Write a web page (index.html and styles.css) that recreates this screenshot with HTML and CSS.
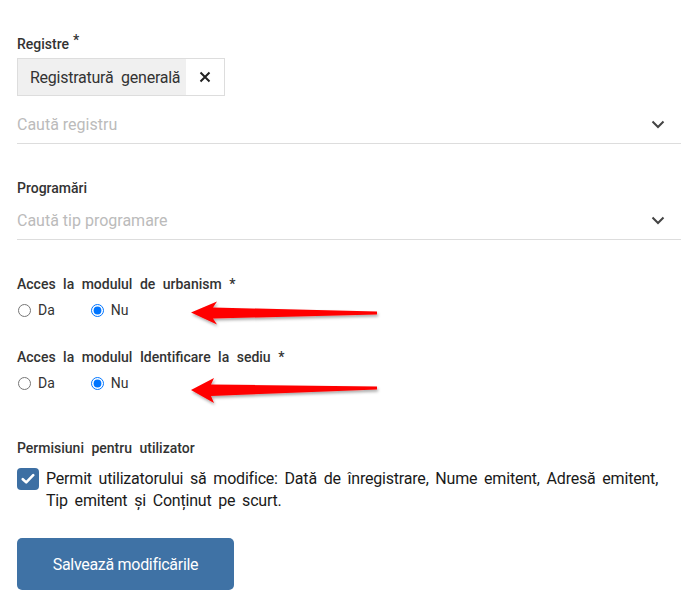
FILE: index.html
```html
<!DOCTYPE html>
<html>
<head>
    <title>Setări utilizator</title>
    <link rel="stylesheet" href="styles.css">
</head>
<body>
    <div class="page">
        <form class="form">
            <div class="field field-first">
                <div class="label">Registre<sup class="req">*</sup></div>
                <div class="tag">
                    <span class="tag-text">Registratură generală</span>
                    <span class="tag-remove">
                        <svg width="12" height="12" viewBox="0 0 12 12"><path d="M1.5 1.5 L10.5 10.5 M10.5 1.5 L1.5 10.5" stroke="#222" stroke-width="2" fill="none"/></svg>
                    </span>
                </div>
                <div class="select select-tight">
                    <span class="placeholder">Caută registru</span>
                    <svg class="chevron" width="14" height="9" viewBox="0 0 14 9"><path d="M1.5 1.5 L7 7 L12.5 1.5" stroke="#444" stroke-width="2" fill="none"/></svg>
                </div>
            </div>

            <div class="field">
                <div class="label">Programări</div>
                <div class="select">
                    <span class="placeholder">Caută tip programare</span>
                    <svg class="chevron" width="14" height="9" viewBox="0 0 14 9"><path d="M1.5 1.5 L7 7 L12.5 1.5" stroke="#444" stroke-width="2" fill="none"/></svg>
                </div>
            </div>

            <div class="field">
                <div class="label">Acces la modulul de urbanism *</div>
                <div class="radios">
                    <label class="radio"><input type="radio" name="urbanism"> Da</label>
                    <label class="radio"><input type="radio" name="urbanism" checked> Nu</label>
                </div>
            </div>

            <div class="field field-near">
                <div class="label">Acces la modulul Identificare la sediu *</div>
                <div class="radios">
                    <label class="radio"><input type="radio" name="sediu"> Da</label>
                    <label class="radio"><input type="radio" name="sediu" checked> Nu</label>
                </div>
            </div>

            <div class="field field-perm">
                <div class="label">Permisiuni pentru utilizator</div>
                <div class="check-row">
                    <span class="checkbox">
                        <svg width="14" height="12" viewBox="0 0 14 12"><path d="M1.8 6.2 L5.2 9.4 L12.2 2.2" stroke="#fff" stroke-width="2.6" fill="none" stroke-linecap="round" stroke-linejoin="round"/></svg>
                    </span>
                    <span class="check-text">Permit utilizatorului să modifice: Dată de înregistrare, Nume emitent, Adresă emitent, Tip emitent și Conținut pe scurt.</span>
                </div>
            </div>

            <button type="button" class="save">Salvează modificările</button>
        </form>

        <!-- adnotări -->
        <svg class="arrows" width="696" height="600" viewBox="0 0 696 600">
            <defs>
                <filter id="shadow" x="-10%" y="-50%" width="120%" height="200%">
                    <feDropShadow dx="1" dy="2" stdDeviation="1.5" flood-color="#000" flood-opacity="0.35"/>
                </filter>
            </defs>
            <polygon filter="url(#shadow)" fill="#ff0000" points="191,312.5 217,301.5 213,307.5 377,311.5 377,314.5 213,318.5 217,324.5"/>
            <polygon filter="url(#shadow)" fill="#ff0000" points="191,390 214,378 211,384.5 377,386.5 377,389.5 211,396 214,403"/>
        </svg>
    </div>
</body>
</html>
```

FILE: styles.css
```css
body {
    margin: 0;
    background-color: #fff;
    color: #333;
    font-family: Roboto, "Liberation Sans", Arial, sans-serif;
}

.page {
    position: relative;
    width: 696px;
    height: 600px;
    overflow: hidden;
}

.form {
    padding: 34px 15px 0 17px;
}

.field {
    margin-top: 34px;
}

.field-first {
    margin-top: 0;
}

.field-near {
    margin-top: 27px;
}

.field-perm {
    margin-top: 45px;
}

.label {
    font-size: 14px;
    font-weight: 500;
    line-height: 20px;
    color: #333;
    word-spacing: 4px;
}

.req {
    margin-left: 4px;
    font-size: 14px;
    line-height: 0;
    vertical-align: 4px;
}

.tag {
    display: inline-flex;
    margin-top: 4px;
    height: 36px;
    border: 1px solid #ddd;
    font-size: 16px;
}

.tag-text {
    display: flex;
    align-items: center;
    padding: 0 6px 0 12px;
    background-color: #f0f0f0;
    color: #333;
    letter-spacing: -0.25px;
    word-spacing: 4px;
}

.tag-remove {
    display: flex;
    align-items: center;
    justify-content: center;
    width: 38px;
    background-color: #fff;
}

.select {
    display: flex;
    align-items: center;
    justify-content: space-between;
    height: 38px;
    margin-top: 3px;
    border-bottom: 1px solid #ddd;
}

.select-tight {
    margin-top: 9px;
}

.placeholder {
    font-size: 16px;
    color: #bbb;
}

.chevron {
    margin-right: 16px;
}

.radios {
    display: flex;
    gap: 35px;
    margin-top: 6px;
    height: 20px;
    align-items: center;
}

.radio {
    display: flex;
    align-items: center;
    font-size: 14px;
    color: #333;
}

.radio input {
    width: 13px;
    height: 13px;
    margin: 0 7px 0 1px;
}

.check-row {
    display: flex;
    align-items: flex-start;
    margin-top: 10px;
}

.checkbox {
    display: flex;
    flex-shrink: 0;
    align-items: center;
    justify-content: center;
    width: 22px;
    height: 22px;
    margin-right: 7px;
    border-radius: 4px;
    background-color: #3d6fa3;
}

.check-text {
    font-size: 16px;
    line-height: 22px;
    color: #1a1a1a;
    letter-spacing: -0.2px;
    word-spacing: 3px;
}

.save {
    display: block;
    margin-top: 26px;
    width: 217px;
    height: 52px;
    border: none;
    border-radius: 5px;
    background-color: #3f72a5;
    color: #fff;
    font-family: Roboto, "Liberation Sans", Arial, sans-serif;
    font-size: 16px;
    font-weight: 400;
    letter-spacing: -0.3px;
    cursor: pointer;
}

.arrows {
    position: absolute;
    left: 0;
    top: 0;
    pointer-events: none;
}
```
